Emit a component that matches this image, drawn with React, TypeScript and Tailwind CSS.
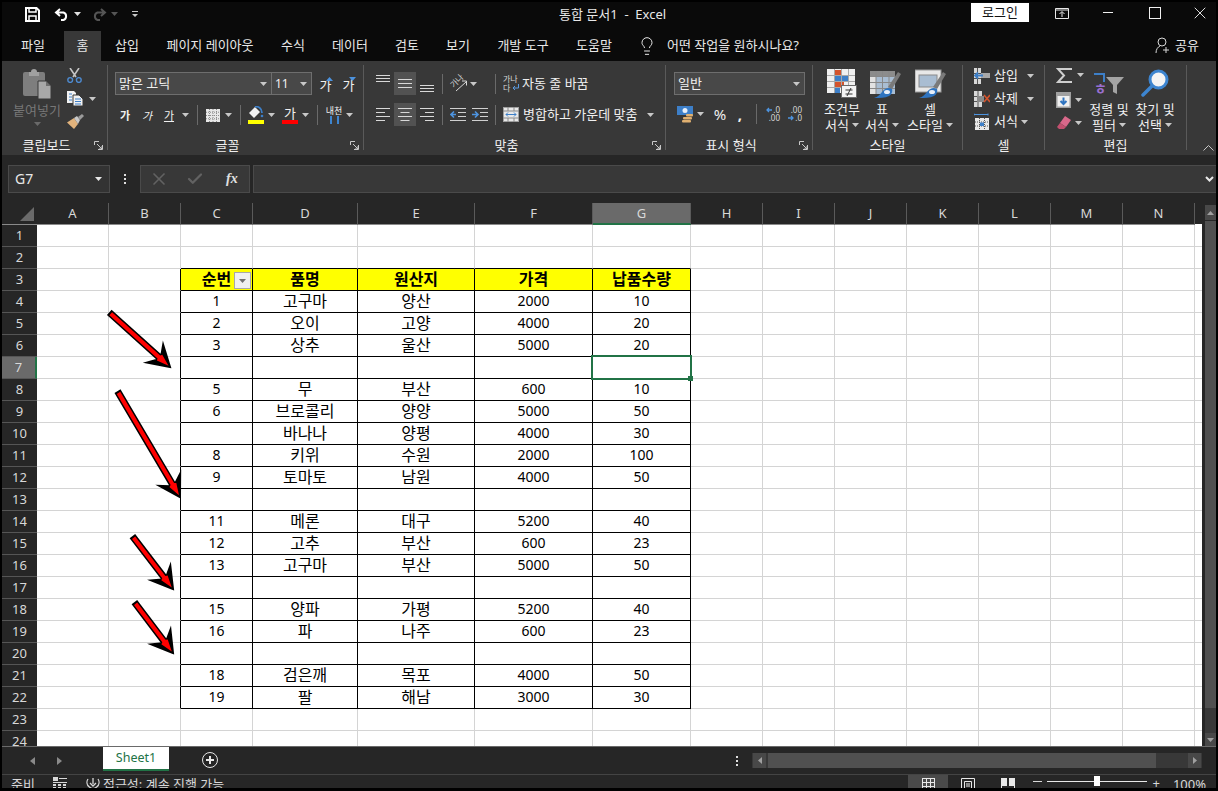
import type { ReactNode } from 'react';
import { Check, Lightbulb, X } from 'lucide-react';

const COLS = ['A', 'B', 'C', 'D', 'E', 'F', 'G', 'H', 'I', 'J', 'K', 'L', 'M', 'N'];

const TABLE: Record<number, string[]> = {
  3: ['순번', '품명', '원산지', '가격', '납품수량'],
  4: ['1', '고구마', '양산', '2000', '10'],
  5: ['2', '오이', '고양', '4000', '20'],
  6: ['3', '상추', '울산', '5000', '20'],
  7: ['', '', '', '', ''],
  8: ['5', '무', '부산', '600', '10'],
  9: ['6', '브로콜리', '양양', '5000', '50'],
  10: ['', '바나나', '양평', '4000', '30'],
  11: ['8', '키위', '수원', '2000', '100'],
  12: ['9', '토마토', '남원', '4000', '50'],
  13: ['', '', '', '', ''],
  14: ['11', '메론', '대구', '5200', '40'],
  15: ['12', '고추', '부산', '600', '23'],
  16: ['13', '고구마', '부산', '5000', '50'],
  17: ['', '', '', '', ''],
  18: ['15', '양파', '가평', '5200', '40'],
  19: ['16', '파', '나주', '600', '23'],
  20: ['', '', '', '', ''],
  21: ['18', '검은깨', '목포', '4000', '50'],
  22: ['19', '팔', '해남', '3000', '30'],
};

const TABS = [
  { label: '파일', w: 'w-[62px]' },
  { label: '홈', w: 'w-[37px]', active: true },
  { label: '삽입', w: 'w-[52px]' },
  { label: '페이지 레이아웃', w: 'w-[114px]' },
  { label: '수식', w: 'w-[52px]' },
  { label: '데이터', w: 'w-[62px]' },
  { label: '검토', w: 'w-[52px]' },
  { label: '보기', w: 'w-[50px]' },
  { label: '개발 도구', w: 'w-[80px]' },
  { label: '도움말', w: 'w-[62px]' },
];

const ARROWS = [
  [110, 313, 170, 367],
  [118, 392, 180, 497],
  [133, 537, 173, 589],
  [135, 603, 173, 653],
];

function arrowAt([x1, y1, x2, y2]: number[]) {
  const len = Math.hypot(x2 - x1, y2 - y1);
  const ux = (x2 - x1) / len;
  const uy = (y2 - y1) / len;
  const at = (back: number, side: number) => `${x2 - ux * back - uy * side},${y2 - uy * back + ux * side}`;
  return { at, len };
}

function arrowOutline(a: number[]) {
  const { at, len } = arrowAt(a);
  return [at(0, 0), at(20, 12), at(14, 2.5), at(len, 2.5), at(len, -2.5), at(14, -2.5), at(20, -12)].join(' ');
}

function arrowCore(a: number[]) {
  const { at, len } = arrowAt(a);
  return [at(2, 0), at(14, 4), at(15, 2), at(len - 1, 2), at(len - 1, -2), at(15, -2), at(14, -4)].join(' ');
}

function Caret({ className = '', color = '#c8c8c8' }: { className?: string; color?: string }) {
  return (
    <svg width="7" height="4" viewBox="0 0 7 4" className={`shrink-0 ${className}`}>
      <path d="M0 0h7L3.5 4z" fill={color} />
    </svg>
  );
}

function Sep({ className = '' }: { className?: string }) {
  return <div className={`h-[20px] w-px shrink-0 bg-[#6a6a6a] ${className}`} />;
}

function Launcher() {
  return (
    <svg width="9" height="9" viewBox="0 0 9 9" className="absolute bottom-[0px] right-[4px]" fill="none" stroke="#c8c8c8">
      <path d="M8.5 4V8.5H4M.5 4V.5H5M3 3l5 5M8 5v3H5" />
    </svg>
  );
}

function Group({ label, launcher, width, children }: { label: string; launcher?: boolean; width: string; children: ReactNode }) {
  return (
    <div className={`relative flex h-[85px] shrink-0 flex-col border-r border-[#5a5a5a] ${width}`}>
      <div className="h-[71px]">{children}</div>
      <div className={`h-[14px] text-center leading-[18px] ${launcher ? 'pr-[16px]' : ''}`}>{label}</div>
      {launcher && <Launcher />}
    </div>
  );
}

function SaveIcon() {
  return (
    <svg width="15" height="15" viewBox="0 0 15 15" fill="none" stroke="#fff" strokeWidth="2">
      <path d="M1 1h10.5L14 3.5V14H1z" />
      <path d="M4 1v4h7V1M4 14V9h7v5" strokeWidth="1.5" />
    </svg>
  );
}

function UndoIcon({ color }: { color: string }) {
  return (
    <svg width="15" height="13" viewBox="0 0 15 13" fill="none" stroke={color} strokeWidth="2">
      <path d="M6 1 2 4.5l4 3.500M2 4.5h7.500a4 4 0 0 1 0 7.500H7" />
    </svg>
  );
}

function RedoIcon({ color }: { color: string }) {
  return (
    <svg width="15" height="13" viewBox="0 0 15 13" fill="none" stroke={color} strokeWidth="2">
      <path d="m9 1 4 3.5L9 8M13 4.5H5.500a4 4 0 0 0 0 7.500H8" />
    </svg>
  );
}

function PasteIcon() {
  return (
    <svg width="28" height="31" viewBox="0 0 28 31">
      <path d="M2 4h18a2 2 0 0 1 2 2v22H2a2 2 0 0 1-2-2V6a2 2 0 0 1 2-2z" fill="#7e7e7e" />
      <path d="M6 4h2a3 3 0 0 1 6 0h2v4H6z" fill="#a0a0a0" />
      <path d="M15 13h8l5 5v13H15z" fill="#a8a8a8" stroke="#383838" />
      <path d="M23 13v5h5" fill="#6e6e6e" />
    </svg>
  );
}

function ScissorsIcon() {
  return (
    <svg width="15" height="15" viewBox="0 0 15 15" fill="none">
      <path d="M3 0l6 9M12 0 6 9" stroke="#c4c4c4" strokeWidth="1.6" />
      <circle cx="3.2" cy="12" r="2.4" stroke="#4d8ad0" strokeWidth="1.4" />
      <circle cx="11.8" cy="12" r="2.4" stroke="#4d8ad0" strokeWidth="1.4" />
    </svg>
  );
}

function CopyIcon() {
  return (
    <svg width="16" height="15" viewBox="0 0 16 15">
      <path d="M0 0h7l2 2v10H0z" fill="#f2f2f2" />
      <path d="M2 3h3M2 6h3M2 9h3" stroke="#3d7fc8" />
      <path d="M6 4h6l4 4v7H6z" fill="#f2f2f2" stroke="#383838" />
      <path d="M8 8h6M8 10.5h6M8 13h6" stroke="#3d7fc8" />
    </svg>
  );
}

function BrushIcon() {
  return (
    <svg width="17" height="15" viewBox="0 0 17 15">
      <path d="M0 8.5 7 4l4 6-4 5z" fill="#e2b37c" />
      <path d="m7 4 3-2 3 4-2 4z" fill="#c9c9c9" />
      <path d="m11 3 4-3 2 2-4 4z" fill="#9a9a9a" />
    </svg>
  );
}

function TextGlyph({ children, className = '' }: { children: ReactNode; className?: string }) {
  return <span className={`text-[11px] leading-none ${className}`}>{children}</span>;
}

function BordersIcon() {
  return (
    <svg width="14" height="13" viewBox="0 0 14 13">
      <rect width="14" height="13" fill="#e8e8e8" />
      <path d="M3.5 0v13M7 0v13M10.5 0v13M0 3.25h14M0 6.5h14M0 9.75h14" stroke="#8c8c8c" strokeDasharray="1 1" />
    </svg>
  );
}

function FillIcon() {
  return (
    <svg width="16" height="18" viewBox="0 0 16 18">
      <path d="M7 1 1 7l5 5 6-6z" fill="#f2f2f2" />
      <path d="M7 1c3-1 7 1 7 6" fill="none" stroke="#3d7fc8" strokeWidth="1.8" />
      <circle cx="14" cy="10" r="1.3" fill="#3d7fc8" />
      <rect y="14" width="16" height="4" fill="#ffff00" />
    </svg>
  );
}

function AlignLines({ d, selected, className = '' }: { d: string; selected?: boolean; className?: string }) {
  return (
    <div className={`flex h-[23px] shrink-0 items-center justify-center ${selected ? 'w-[22px] bg-[#525252]' : 'w-[14px]'} ${className}`}>
      <svg width="14" height="23" viewBox="0 0 14 23" fill="none" stroke="#d8d8d8">
        <path d={d} />
      </svg>
    </div>
  );
}

function OrientIcon() {
  return (
    <div className="relative h-[18px] w-[18px]">
      <span className="absolute left-[-1px] top-[1px] h-[9px] -rotate-45 whitespace-nowrap text-[8px] leading-[9px] text-[#d8d8d8]">가나</span>
      <svg width="18" height="18" viewBox="0 0 18 18" fill="none" className="absolute left-0 top-0">
        <path d="M6 16 16 7M12 6h4.500v4.500" stroke="#d8d8d8" />
      </svg>
    </div>
  );
}

function WrapIcon() {
  return (
    <div className="relative h-[17px] w-[16px] text-[8px] text-[#d8d8d8]">
      <div className="h-[8px] whitespace-nowrap leading-[8px]">가나</div>
      <div className="mt-[1px] h-[8px] leading-[8px]">다</div>
      <svg width="7" height="8" viewBox="0 0 7 8" fill="none" stroke="#5a9ae0" className="absolute bottom-0 right-0">
        <path d="M6.500 0v4H1m2-2-2 2 2 2" />
      </svg>
    </div>
  );
}

function MergeIcon() {
  return (
    <svg width="16" height="15" viewBox="0 0 16 15" fill="none">
      <rect x=".5" y=".5" width="15" height="14" fill="#e8e8e8" stroke="#a0a0a0" />
      <path d="M0 4h16M0 11h16M5 0v4M11 0v4M5 11v4M11 11v4" stroke="#8a8a8a" />
      <path d="M3 7.5h10M5 5.5l-2 2 2 2M11 5.5l2 2-2 2" stroke="#3d7fc8" />
    </svg>
  );
}

function IndentIcon({ flip }: { flip?: boolean }) {
  return (
    <svg width="16" height="13" viewBox="0 0 16 13" fill="none">
      <path d="M0 .5h16M8 4.5h8M8 8.5h8M0 12.5h16" stroke="#d0d0d0" />
      {flip ? <path d="M0 6.5h5M3 3.5l3 3-3 3" stroke="#4d94e0" strokeWidth="1.6" /> : <path d="M6 6.5H1M4 3.5l-3 3 3 3" stroke="#4d94e0" strokeWidth="1.6" />}
    </svg>
  );
}

function CurrencyIcon() {
  return (
    <svg width="16" height="17" viewBox="0 0 16 17">
      <rect width="16" height="9" fill="#3d7fc8" />
      <circle cx="8" cy="4.5" r="2.5" fill="#e8f0fa" />
      <rect x="6" y="11" width="9" height="2.500" rx="1" fill="#e0b070" />
      <rect x="5" y="14" width="9" height="2.500" rx="1" fill="#e0b070" />
      <rect x="9" y="8" width="7" height="2.500" rx="1" fill="#e0b070" />
    </svg>
  );
}

function DecimalIcon({ more }: { more?: boolean }) {
  return (
    <div className="flex h-[16px] w-[16px] flex-col text-[8px] text-[#d8d8d8]">
      <div className="flex h-[8px] items-center justify-end leading-[8px]">
        {more && (
          <svg width="6" height="6" viewBox="0 0 6 6" fill="none" stroke="#4d94e0" strokeWidth="1.3" className="mr-[1px]">
            <path d="M6 3H1m2-2-2 2 2 2" />
          </svg>
        )}
        {more ? '.0' : '.00'}
      </div>
      <div className="flex h-[8px] items-center justify-end leading-[8px]">
        {!more && (
          <svg width="6" height="6" viewBox="0 0 6 6" fill="none" stroke="#4d94e0" strokeWidth="1.3" className="mr-[1px]">
            <path d="M0 3h5M3 1l2 2-2 2" />
          </svg>
        )}
        {more ? '.00' : '.0'}
      </div>
    </div>
  );
}

function CondFormatIcon() {
  return (
    <svg width="30" height="29" viewBox="0 0 30 29">
      <rect width="28" height="24" fill="#f0f0f0" />
      <rect x="8" y="1" width="6" height="5" fill="#d4532c" />
      <rect x="8" y="7" width="14" height="5" fill="#3d7fc8" />
      <rect x="8" y="13" width="9" height="5" fill="#d4532c" />
      <rect x="8" y="19" width="5" height="5" fill="#3d7fc8" />
      <path d="M7.500 0v24M14.500 0v24M21.500 0v24M0 6.500h28M0 12.500h28M0 18.500h28" stroke="#a8a8a8" />
      <rect x="14.500" y="16.500" width="15" height="12" fill="#f4f4f4" stroke="#6a6a6a" />
      <path d="M18.500 21h7M18.500 25h7M24 19l-4 8" stroke="#333" />
    </svg>
  );
}

function BrushStroke() {
  return (
    <>
      <path d="m28 3 3 2-9 15-4-2z" fill="#7a7a7a" />
      <path d="M4 29c4-1 6-4 8-6 3-4 7-5 10-3 1 3-1 6-3 7-4 2-9 2-15 2z" fill="#2f74c0" />
      <ellipse cx="17" cy="23" rx="3" ry="2" fill="#e8f0fa" />
    </>
  );
}

function TableStyleIcon() {
  return (
    <svg width="31" height="29" viewBox="0 0 31 29" className="ml-[6px]">
      <rect y="2" width="25" height="23" fill="#e2e2e2" />
      <rect y="2" width="25" height="5" fill="#8c8c8c" />
      <rect x="6" y="7" width="19" height="18" fill="#a9bdd2" />
      <path d="M6 2v23M12.500 2v23M19 2v23M0 7.500h25M0 13.500h25M0 19.500h25" stroke="#888" />
      <BrushStroke />
    </svg>
  );
}

function CellStyleIcon() {
  return (
    <svg width="31" height="29" viewBox="0 0 31 29">
      <rect y="1" width="26" height="22" fill="#e8e8e8" stroke="#9a9a9a" />
      <rect x="4" y="6" width="18" height="12" fill="#a9bdd2" stroke="#8a8a8a" />
      <BrushStroke />
    </svg>
  );
}

function InsertCellIcon() {
  return (
    <svg width="16" height="16" viewBox="0 0 16 16">
      <path d="M0 0h7v16H0z" fill="#d8d8d8" />
      <path d="M0 5.500h7M0 10.500h7M3.500 0v16" stroke="#555" />
      <rect x="7" y="5" width="9" height="5" fill="#a8a8a8" />
      <path d="M9 7.500H1M4 4.500 1 7.500l3 3" fill="none" stroke="#3d7fc8" strokeWidth="1.8" />
    </svg>
  );
}

function DeleteCellIcon() {
  return (
    <svg width="16" height="16" viewBox="0 0 16 16">
      <path d="M0 0h8v16H0z" fill="#d8d8d8" />
      <path d="M0 5.500h8M0 10.500h8M4 0v16" stroke="#555" />
      <rect x="3" y="5" width="7" height="6" fill="#8a8a8a" />
      <path d="m10 4 6 7M16 4l-6 7" stroke="#d4532c" strokeWidth="1.6" />
    </svg>
  );
}

function FormatCellIcon() {
  return (
    <svg width="16" height="18" viewBox="0 0 16 18" fill="none">
      <path d="M0 1.500h14M0 .5v2M14 .5v2" stroke="#4d94e0" />
      <rect x="1" y="5" width="14" height="12" fill="#e8e8e8" />
      <path d="M5.500 5v12M10.500 5v12M1 9h14M1 13h14" stroke="#555" strokeDasharray="1 1" />
      <rect x="6" y="9.500" width="4" height="3.500" fill="#3d7fc8" />
    </svg>
  );
}

function SigmaIcon() {
  return (
    <svg width="16" height="15" viewBox="0 0 16 15" fill="none" stroke="#cfcfcf" strokeWidth="2">
      <path d="M15 2V1H2l6 6.500L2 14h13v-1" />
    </svg>
  );
}

function FillDownIcon() {
  return (
    <svg width="15" height="16" viewBox="0 0 15 16">
      <rect width="15" height="16" fill="#a0a0a0" />
      <rect x="1.500" y="4" width="12" height="10.500" fill="#f0f0f0" />
      <path d="M7.500 5.500V12M4.500 9l3 3 3-3" fill="none" stroke="#2f74c0" strokeWidth="2" />
    </svg>
  );
}

function EraserIcon() {
  return (
    <svg width="15" height="13" viewBox="0 0 15 13">
      <path d="M9 0l6 4-5 7-6-4z" fill="#d9688a" />
      <path d="M4 7l6 4-2 2H3L1 11z" fill="#c2506f" />
    </svg>
  );
}

function SortIcon() {
  return (
    <div className="relative mt-[3px] h-[24px] w-[32px]">
      <span className="absolute bottom-[0px] left-[1px] h-[14px] text-[14px] font-bold leading-[14px] text-[#9a6fd0]">ㅎ</span>
      <svg width="32" height="24" viewBox="0 0 32 24" fill="none" className="absolute left-0 top-0">
        <path d="M1 2h10v8" stroke="#3d7fc8" strokeWidth="2" />
        <path d="M13 5h18l-7 8v9l-4-2v-7z" fill="#a4a4a4" />
      </svg>
    </div>
  );
}

function FindIcon() {
  return (
    <svg width="28" height="28" viewBox="0 0 28 28" fill="none">
      <circle cx="17.500" cy="10.500" r="8.500" fill="#f4f4f4" stroke="#3d85d0" strokeWidth="3" />
      <path d="M11 17 2 26" stroke="#3d85d0" strokeWidth="3.500" strokeLinecap="round" />
    </svg>
  );
}

function BigButton({ icon, line1, line2, width }: { icon: ReactNode; line1: string; line2: string; width: string }) {
  return (
    <div className={`flex shrink-0 flex-col items-center ${width}`}>
      <div className="flex h-[32px] items-start justify-center pt-[4px]">{icon}</div>
      <div className="mt-[4px] h-[16px] whitespace-nowrap leading-[16px]">{line1}</div>
      <div className="flex h-[16px] items-center gap-[3px] whitespace-nowrap leading-[16px]">
        {line2}
        <Caret />
      </div>
    </div>
  );
}

function SmallRow({ icon, label, gap }: { icon: ReactNode; label: string; gap: string }) {
  return (
    <div className="flex h-[23px] items-center pl-[11px]">
      <div className="flex w-[16px] justify-center">{icon}</div>
      <span className="ml-[4px] w-[25px] whitespace-nowrap">{label}</span>
      <Caret className={gap} />
    </div>
  );
}

function Ribbon() {
  return (
    <div className="flex h-[94px] shrink-0 bg-[#383838] pt-[4px] text-[13px] text-[#f0f0f0]">
      <Group label="클립보드" launcher width="w-[106px]">
        <div className="flex pl-[11px]">
          <div className="flex w-[48px] flex-col items-center pt-[3px]">
            <PasteIcon />
            <span className="mt-[3px] leading-[16px] text-[#777777]">붙여넣기</span>
            <Caret className="mt-[4px]" color="#6a6a6a" />
          </div>
          <div className="ml-[6px] flex flex-col pt-[3px]">
            <ScissorsIcon />
            <div className="mt-[8px] flex items-center gap-[6px]">
              <CopyIcon />
              <Caret />
            </div>
            <div className="mt-[8px]">
              <BrushIcon />
            </div>
          </div>
        </div>
      </Group>

      <Group label="글꼴" launcher width="w-[256px]">
        <div className="mt-[7px] flex h-[23px] items-center pl-[7px]">
          <div className="flex h-full w-[157px] items-center justify-between border border-[#6e6e6e] bg-[#484848] pl-[3px] pr-[4px] leading-none">
            맑은 고딕
            <Caret />
          </div>
          <div className="flex h-full w-[40px] items-center justify-between border border-l-0 border-[#6e6e6e] bg-[#484848] pl-[3px] pr-[4px] text-[12px] leading-none">
            11
            <Caret />
          </div>
          <div className="relative ml-[6px] w-[15px] pt-[3px] text-center leading-none">
            가<Caret className="absolute right-0 top-[1px] rotate-180" color="#4d94e0" />
          </div>
          <div className="relative ml-[8px] w-[15px] pt-[3px] text-center leading-none">
            가<Caret className="absolute right-0 top-[1px]" color="#4d94e0" />
          </div>
        </div>
        <div className="mt-[10px] flex h-[20px] items-center pl-[6px]">
          <TextGlyph className="w-[22px] text-center font-bold">가</TextGlyph>
          <TextGlyph className="w-[22px] text-center italic">가</TextGlyph>
          <TextGlyph className="w-[22px] text-center underline">가</TextGlyph>
          <Caret className="ml-[2px]" />
          <Sep className="ml-[8px]" />
          <div className="ml-[8px]">
            <BordersIcon />
          </div>
          <Caret className="ml-[5px]" />
          <Sep className="ml-[8px]" />
          <div className="ml-[7px]">
            <FillIcon />
          </div>
          <Caret className="ml-[4px]" />
          <div className="ml-[7px] flex w-[16px] flex-col items-center">
            <span className="h-[13px] text-[13px] leading-[13px]">가</span>
            <span className="h-[4px] w-[16px] bg-[#ff0000]" />
          </div>
          <Caret className="ml-[4px]" />
          <Sep className="ml-[8px]" />
          <div className="ml-[8px] flex w-[16px] flex-col items-center">
            <span className="h-[9px] whitespace-nowrap text-[9px] leading-[9px]">내천</span>
            <span className="mt-[1px] h-[8px] w-[9px] border-x-2 border-[#3d85d0]" />
          </div>
          <Caret className="ml-[4px]" />
        </div>
      </Group>

      <Group label="맞춤" launcher width="w-[302px]">
        <div className="mt-[7px] flex h-[23px] items-center pl-[12px]">
          <AlignLines d="M0 3.500h14M0 6.500h14M0 9.500h14" />
          <AlignLines selected className="ml-[4px]" d="M0 7.500h14M0 11.500h14M0 15.500h14" />
          <AlignLines className="ml-[4px]" d="M0 13.500h14M0 16.500h14M0 19.500h14" />
          <Sep className="ml-[8px]" />
          <div className="ml-[7px]">
            <OrientIcon />
          </div>
          <Caret className="ml-[2px]" />
          <Sep className="ml-[18px]" />
          <div className="ml-[7px]">
            <WrapIcon />
          </div>
          <span className="ml-[3px] whitespace-nowrap">자동 줄 바꿈</span>
        </div>
        <div className="mt-[8px] flex h-[23px] items-center pl-[12px]">
          <AlignLines d="M0 5.500h14M0 9.500h9M0 13.500h14M0 17.500h9" />
          <AlignLines selected className="ml-[4px]" d="M0 5.500h14M2.500 9.500h9M0 13.500h14M2.500 17.500h9" />
          <AlignLines className="ml-[4px]" d="M0 5.500h14M5 9.500h9M0 13.500h14M5 17.500h9" />
          <Sep className="ml-[8px]" />
          <div className="ml-[7px]">
            <IndentIcon />
          </div>
          <div className="ml-[6px]">
            <IndentIcon flip />
          </div>
          <Sep className="ml-[7px]" />
          <div className="ml-[7px]">
            <MergeIcon />
          </div>
          <span className="ml-[4px] w-[124px] whitespace-nowrap">병합하고 가운데 맞춤</span>
          <Caret />
        </div>
      </Group>

      <Group label="표시 형식" launcher width="w-[147px]">
        <div className="ml-[8px] mt-[7px] flex h-[23px] w-[131px] items-center justify-between border border-[#6e6e6e] bg-[#484848] pl-[3px] pr-[4px] leading-none">
          일반
          <Caret />
        </div>
        <div className="mt-[9px] flex h-[20px] items-center pl-[11px]">
          <CurrencyIcon />
          <Caret className="ml-[4px]" />
          <span className="ml-[9px] w-[14px] text-center text-[15px] leading-none">%</span>
          <span className="ml-[8px] w-[10px] text-center text-[15px] font-bold leading-none">,</span>
          <Sep className="ml-[11px]" />
          <div className="ml-[7px]">
            <DecimalIcon more />
          </div>
          <div className="ml-[6px]">
            <DecimalIcon />
          </div>
        </div>
      </Group>

      <Group label="스타일" width="w-[150px]">
        <div className="flex pl-[9px]">
          <BigButton width="w-[40px]" icon={<CondFormatIcon />} line1="조건부" line2="서식" />
          <BigButton width="w-[40px]" icon={<TableStyleIcon />} line1="표" line2="서식" />
          <BigButton width="w-[56px]" icon={<CellStyleIcon />} line1="셀" line2="스타일" />
        </div>
      </Group>

      <Group label="셀" width="w-[82px]">
        <div className="-mt-[1px]">
          <SmallRow icon={<InsertCellIcon />} label="삽입" gap="ml-[8px]" />
          <SmallRow icon={<DeleteCellIcon />} label="삭제" gap="ml-[8px]" />
          <SmallRow icon={<FormatCellIcon />} label="서식" gap="ml-[2px]" />
        </div>
      </Group>

      <Group label="편집" width="w-[142px]">
        <div className="flex">
          <div className="w-[41px] pl-[11px]">
            <div className="flex h-[20px] items-center gap-[5px]">
              <SigmaIcon />
              <Caret />
            </div>
            <div className="mt-[3px] flex h-[23px] items-center gap-[4px]">
              <FillDownIcon />
              <Caret />
            </div>
            <div className="flex h-[23px] items-center gap-[4px]">
              <EraserIcon />
              <Caret />
            </div>
          </div>
          <BigButton width="w-[46px]" icon={<SortIcon />} line1="정렬 및" line2="필터" />
          <BigButton width="w-[46px]" icon={<FindIcon />} line1="찾기 및" line2="선택" />
        </div>
      </Group>

      <div className="flex flex-1 items-end justify-end pb-[4px] pr-[2px]">
        <svg width="11" height="6" viewBox="0 0 11 6" fill="none" stroke="#c8c8c8">
          <path d="m.5 5.500 5-5 5 5" />
        </svg>
      </div>
    </div>
  );
}

function TitleBar() {
  return (
    <div className="flex h-[29px] shrink-0 items-center bg-[#0a0a0a] pb-[5px] text-[13px] text-[#e8e8e8]">
      <div className="flex w-[557px] shrink-0 items-center pl-[23px]">
        <SaveIcon />
        <div className="ml-[14px]">
          <UndoIcon color="#ffffff" />
        </div>
        <Caret className="ml-[5px]" color="#e0e0e0" />
        <div className="ml-[11px]">
          <RedoIcon color="#555555" />
        </div>
        <Caret className="ml-[4px]" color="#555555" />
        <svg width="6" height="6" viewBox="0 0 6 6" className="ml-[14px]" fill="#c8c8c8">
          <path d="M0 0h6v1H0zM0 3h6L3 6z" />
        </svg>
      </div>
      <span className="whitespace-nowrap leading-none">통합 문서1&nbsp; - &nbsp;Excel</span>
      <div className="flex-1" />
      <div className="mb-[3px] flex items-center">
        <div className="flex h-[19px] w-[58px] items-center justify-center bg-white leading-none text-[#111111]">로그인</div>
        <svg width="14" height="12" viewBox="0 0 14 12" className="ml-[26px]" fill="none" stroke="#e8e8e8">
          <path d="M.5 1.500h13v10H.5zM.5 3h13M7 10V5M4.500 7 7 4.500 9.500 7" />
        </svg>
        <div className="ml-[34px] h-px w-[10px] bg-[#f0f0f0]" />
        <div className="ml-[36px] h-[12px] w-[12px] border border-[#f0f0f0]" />
        <X size={20} strokeWidth={1.1} color="#f0f0f0" className="ml-[29px] mr-[6px]" />
      </div>
    </div>
  );
}

function TabRow() {
  return (
    <div className="flex h-[30px] shrink-0 items-stretch bg-[#0a0a0a] pb-[1px] text-[13px] text-[#e8e8e8]">
      {TABS.map((tab) => (
        <div key={tab.label} className={`-mb-[1px] flex items-center justify-center whitespace-nowrap pb-[1px] leading-none ${tab.w} ${tab.active ? 'bg-[#383838]' : ''}`}>
          {tab.label}
        </div>
      ))}
      <div className="ml-[12px] flex items-center">
        <Lightbulb size={20} strokeWidth={1.2} color="#e8e8e8" />
      </div>
      <div className="ml-[10px] flex items-center whitespace-nowrap leading-none">어떤 작업을 원하시나요?</div>
      <div className="flex-1" />
      <div className="mr-[17px] flex items-center gap-[5px] leading-none">
        <svg width="15" height="17" viewBox="0 0 15 17" fill="none" stroke="#d8d8d8">
          <circle cx="7" cy="5" r="4" />
          <path d="M1 16c0-4 2-6 4-7M11 10v6M8 13h6" />
        </svg>
        공유
      </div>
    </div>
  );
}

function FormulaBar() {
  return (
    <div className="flex h-[48px] shrink-0 bg-[#262626] pl-[6px] pt-[10px]">
      <div className="flex h-[28px] w-[102px] items-center justify-between border border-[#4a4a4a] bg-[#333333] pl-[6px] pr-[7px] text-[14px] leading-none text-[#e8e8e8]">
        G7
        <Caret color="#e8e8e8" />
      </div>
      <div className="flex h-[28px] w-[30px] flex-col items-center justify-center gap-[2px]">
        <span className="h-[2px] w-[2px] bg-[#e0e0e0]" />
        <span className="h-[2px] w-[2px] bg-[#e0e0e0]" />
        <span className="h-[2px] w-[2px] bg-[#e0e0e0]" />
      </div>
      <div className="flex h-[28px] w-[110px] items-center border border-[#4a4a4a] bg-[#383838] pl-[8px]">
        <X size={20} strokeWidth={2} color="#626262" />
        <Check size={18} strokeWidth={3} color="#626262" className="ml-[17px]" />
        <span className="ml-[22px] font-['Liberation_Serif',serif] text-[14px] font-bold italic leading-none text-[#e0e0e0]">fx</span>
      </div>
      <div className="ml-[3px] flex h-[28px] flex-1 items-center justify-end border-y border-l border-[#4a4a4a] bg-[#383838] pr-[2px]">
        <svg width="9" height="6" viewBox="0 0 9 6" fill="none" stroke="#e8e8e8" strokeWidth="2">
          <path d="m1 1 3.500 3.500L8 1" />
        </svg>
      </div>
    </div>
  );
}

function Cell({ row, col }: { row: number; col: number }) {
  const inTable = row >= 3 && row <= 22 && col >= 2 && col <= 6;
  const rightBlack = inTable || (row >= 3 && row <= 22 && col === 1);
  const bottomBlack = inTable || (row === 2 && col >= 2 && col <= 6);
  const text = inTable ? TABLE[row][col - 2] : '';
  const isNumber = /^\d+$/.test(text);
  const selected = row === 7 && col === 6;
  return (
    <div
      className={`relative flex h-[22px] items-center justify-center border-b border-r leading-none text-black ${rightBlack ? 'border-r-black' : 'border-r-[#d4d4d4]'} ${bottomBlack ? 'border-b-black' : 'border-b-[#d4d4d4]'} ${row === 3 && inTable ? 'bg-[#ffff00] font-bold' : 'bg-white'} ${isNumber ? 'pb-[1px] text-[14px]' : 'pb-[2px] text-[16px]'}`}
    >
      {text}
      {row === 3 && col === 2 && (
        <div className="absolute right-[1px] top-[3px] flex h-[17px] w-[17px] items-center justify-center border border-[#a8a8a8] bg-[#f0f0f0]">
          <Caret color="#707070" />
        </div>
      )}
      {selected && (
        <>
          <div className="absolute -left-[2px] -top-[2px] z-10 h-[25px] w-[101px] border-2 border-[#217346]" />
          <div className="absolute -bottom-[3px] -right-[3px] z-10 h-[5px] w-[5px] bg-[#217346]" />
        </>
      )}
    </div>
  );
}

function Sheet() {
  const rows = Array.from({ length: 24 }, (_, i) => i + 1);
  return (
    <div className="flex h-[543px] shrink-0 bg-[#262626]">
      <div className="h-full w-[1200px] shrink-0 overflow-hidden">
        <div className="grid grid-cols-[35px_72px_72px_72px_105px_117px_118px_98px_repeat(7,72px)_7px]">
          <div className="flex h-[22px] items-end justify-end border-b border-[#8a8a8a] pb-[3px] pr-[3px]">
            <svg width="14" height="14" viewBox="0 0 14 14">
              <path d="M14 0v14H0z" fill="#6a6a6a" />
            </svg>
          </div>
          {COLS.map((c) => (
            <div
              key={c}
              className={`flex h-[22px] items-center justify-center border-r border-[#5a5a5a] text-[13px] leading-none text-[#d8d8d8] ${c === 'G' ? 'border-b-2 border-b-[#217346] bg-[#6a6a6a]' : 'border-b border-b-[#8a8a8a]'}`}
            >
              {c}
            </div>
          ))}
          <div className="h-[22px] border-b border-white" />
          {rows.map((row) => (
            <div key={row} className="contents">
              <div
                className={`flex h-[22px] items-center justify-center border-b border-[#555555] text-[13px] leading-none text-[#d8d8d8] ${row === 7 ? 'border-r-2 border-r-[#217346] bg-[#6a6a6a]' : ''}`}
              >
                {row}
              </div>
              {COLS.map((_, col) => (
                <Cell key={col} row={row} col={col} />
              ))}
              <div className="h-[22px] border-b border-[#d4d4d4] bg-white" />
            </div>
          ))}
        </div>
      </div>
      <div className="ml-[3px] flex w-[11px] flex-col pt-[2px]">
        <div className="flex h-[15px] items-center justify-center bg-[#484848]">
          <svg width="7" height="4" viewBox="0 0 7 4">
            <path d="M0 4h7L3.500 0z" fill="#a0a0a0" />
          </svg>
        </div>
        <div className="mt-[1px] h-[487px] bg-[#505050]" />
        <div className="h-[25px] bg-[#383838]" />
        <div className="flex h-[13px] items-center justify-center bg-[#484848]">
          <Caret color="#a0a0a0" />
        </div>
      </div>
    </div>
  );
}

function SheetTabs() {
  return (
    <div className="flex h-[28px] shrink-0 border-t border-[#6a6a6a] bg-[#262626]">
      <div className="flex w-[101px] shrink-0 items-center pl-[28px]">
        <svg width="5" height="8" viewBox="0 0 5 8">
          <path d="M5 0v8L0 4z" fill="#8a8a8a" />
        </svg>
        <svg width="5" height="8" viewBox="0 0 5 8" className="ml-[22px]">
          <path d="M0 0v8l5-4z" fill="#8a8a8a" />
        </svg>
      </div>
      <div className="flex h-[24px] w-[66px] shrink-0 items-center justify-center border-b-2 border-[#217346] bg-white pt-[1px] text-[12.5px] leading-none text-[#217346]">Sheet1</div>
      <svg width="16" height="16" viewBox="0 0 16 16" className="ml-[33px] mt-[5px]" fill="none" stroke="#e8e8e8">
        <circle cx="8" cy="8" r="7.500" />
        <path d="M8 4v8M4 8h8" strokeWidth="2" />
      </svg>
      <div className="ml-[517px] flex w-[3px] flex-col items-center justify-center gap-[2px]">
        <span className="h-[2px] w-[2px] bg-[#e0e0e0]" />
        <span className="h-[2px] w-[2px] bg-[#e0e0e0]" />
        <span className="h-[2px] w-[2px] bg-[#e0e0e0]" />
      </div>
      <div className="ml-[14px] mt-[6px] flex h-[15px] w-[450px] items-stretch bg-[#383838] px-[1px]">
        <div className="flex w-[13px] items-center justify-center bg-[#484848]">
          <svg width="4" height="7" viewBox="0 0 4 7">
            <path d="M4 0v7L0 3.500z" fill="#a0a0a0" />
          </svg>
        </div>
        <div className="ml-[2px] w-[388px] bg-[#505050]" />
        <div className="flex-1" />
        <div className="flex w-[13px] items-center justify-center bg-[#484848]">
          <svg width="4" height="7" viewBox="0 0 4 7">
            <path d="M0 0v7l4-3.500z" fill="#a0a0a0" />
          </svg>
        </div>
      </div>
    </div>
  );
}

function StatusBar() {
  return (
    <div className="flex h-[14px] shrink-0 overflow-hidden border-t border-[#444444] bg-[#262626] text-[13px] leading-none text-[#d8d8d8]">
      <span className="ml-[9px] mt-[3px] whitespace-nowrap">준비</span>
      <svg width="14" height="12" viewBox="0 0 14 12" className="ml-[18px] mt-[2px]" fill="#d8d8d8">
        <path d="M0 0h5v4H0zM6 1h8v1H6zM0 5h14v1H0zM0 7h3v2H0zM5 7h3v2H5zM10 7h3v2h-3zM0 10h3v2H0zM5 10h3v2H5zM10 10h3v2h-3z" />
      </svg>
      <svg width="16" height="14" viewBox="0 0 16 14" className="ml-[18px] mt-[1px]" fill="none" stroke="#d8d8d8" strokeWidth="1.3">
        <path d="M3 3a6 6 0 1 0 10 0M8 2v6M5 7l3 3 3-3" />
      </svg>
      <span className="ml-[2px] mt-[3px] whitespace-nowrap">접근성: 계속 진행 가능</span>
      <div className="flex-1" />
      <div className="flex h-full w-[40px] items-start justify-center bg-[#4a4a4a] pt-[3px]">
        <svg width="13" height="11" viewBox="0 0 13 11" fill="none" stroke="#e8e8e8">
          <path d="M.5 0v11M4.500 0v11M8.500 0v11M12.500 0v11M0 .5h13M0 4.500h13M0 8.500h13" />
        </svg>
      </div>
      <div className="flex w-[40px] items-start justify-center pt-[3px]">
        <svg width="14" height="11" viewBox="0 0 14 11" fill="none" stroke="#e8e8e8">
          <path d="M.5.5h13v11H.5zM3.500 3.500h7v8h-7zM5 6h4M5 8h4" />
        </svg>
      </div>
      <div className="flex w-[40px] items-start justify-center pt-[3px]">
        <svg width="14" height="11" viewBox="0 0 14 11" fill="#e8e8e8">
          <path d="M0 0h6v8H1v3H0zM8 0h6v11h-1V8H8z" />
        </svg>
      </div>
      <div className="ml-[5px] mt-[6px] h-px w-[9px] bg-[#d8d8d8]" />
      <div className="relative ml-[5px] mt-[6px] h-px w-[100px] bg-[#e8e8e8]">
        <div className="absolute -top-[5px] left-[47px] h-[10px] w-[6px] bg-white" />
      </div>
      <div className="ml-[5px] mt-[2px] text-[13px]">+</div>
      <span className="ml-[13px] mr-[10px] mt-[3px]">100%</span>
    </div>
  );
}

export default function App() {
  return (
    <div className="relative flex h-[791px] w-[1218px] flex-col overflow-hidden bg-black pb-[3px] pl-[2px] pr-[2px] pt-[2px] font-['Noto_Sans','Noto_Sans_CJK_KR',sans-serif]">
      <TitleBar />
      <TabRow />
      <Ribbon />
      <FormulaBar />
      <Sheet />
      <SheetTabs />
      <StatusBar />
      <svg width="1218" height="791" viewBox="0 0 1218 791" className="pointer-events-none absolute left-0 top-0">
        {ARROWS.map((a, i) => (
          <g key={i}>
            <polygon points={arrowOutline(a)} fill="#000000" stroke="#000000" strokeWidth="2" strokeMiterlimit="10" />
            <polygon points={arrowCore(a)} fill="#ff0000" />
          </g>
        ))}
      </svg>
    </div>
  );
}
